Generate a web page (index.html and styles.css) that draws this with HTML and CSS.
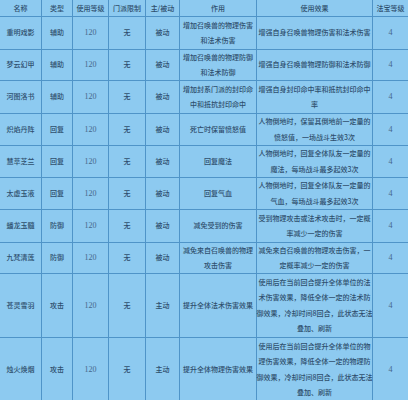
FILE: index.html
```html
<!DOCTYPE html>
<html lang="zh">
<head>
<meta charset="utf-8">
<title>法宝</title>
<link rel="stylesheet" href="styles.css">
</head>
<body>
<div class="table">
  <div class="c h">名称</div><div class="c h">类型</div><div class="c h">使用等级</div><div class="c h">门派限制</div><div class="c h">主/被动</div><div class="c h">作用</div><div class="c h">使用效果</div><div class="c h">法宝等级</div>

  <div class="c">重明戏影</div><div class="c">辅助</div><div class="c n">120</div><div class="c">无</div><div class="c">被动</div><div class="c">增加召唤兽的物理伤害<br>和法术伤害</div><div class="c">增强自身召唤兽物理伤害和法术伤害</div><div class="c n">4</div>

  <div class="c">梦云幻甲</div><div class="c">辅助</div><div class="c n">120</div><div class="c">无</div><div class="c">被动</div><div class="c">增加召唤兽的物理防御<br>和法术防御</div><div class="c">增强自身召唤兽物理防御和法术防御</div><div class="c n">4</div>

  <div class="c">河图洛书</div><div class="c">辅助</div><div class="c n">120</div><div class="c">无</div><div class="c">被动</div><div class="c">增加封系门派的封印命<br>中和抵抗封印命中</div><div class="c">增强自身封印命中率和抵抗封印命中<br>率</div><div class="c n">4</div>

  <div class="c">炽焰丹阵</div><div class="c">回复</div><div class="c n">120</div><div class="c">无</div><div class="c">被动</div><div class="c">死亡时保留愤怒值</div><div class="c">人物倒地时，保留其倒地前一定量的<br>愤怒值，一场战斗生效3次</div><div class="c n">4</div>

  <div class="c">慧萃芝兰</div><div class="c">回复</div><div class="c n">120</div><div class="c">无</div><div class="c">被动</div><div class="c">回复魔法</div><div class="c">人物倒地时，回复全体队友一定量的<br>魔法，每场战斗最多起效3次</div><div class="c n">4</div>

  <div class="c">太虚玉液</div><div class="c">回复</div><div class="c n">120</div><div class="c">无</div><div class="c">被动</div><div class="c">回复气血</div><div class="c">人物倒地时，回复全体队友一定量的<br>气血，每场战斗最多起效3次</div><div class="c n">4</div>

  <div class="c">蟠龙玉髓</div><div class="c">防御</div><div class="c n">120</div><div class="c">无</div><div class="c">被动</div><div class="c">减免受到的伤害</div><div class="c">受到物理攻击或法术攻击时，一定概<br>率减少一定的伤害</div><div class="c n">4</div>

  <div class="c">九梵清莲</div><div class="c">防御</div><div class="c n">120</div><div class="c">无</div><div class="c">被动</div><div class="c">减免来自召唤兽的物理<br>攻击伤害</div><div class="c">减免来自召唤兽的物理攻击伤害，一<br>定概率减少一定的伤害</div><div class="c n">4</div>

  <div class="c">苍灵雪羽</div><div class="c">攻击</div><div class="c n">120</div><div class="c">无</div><div class="c">主动</div><div class="c">提升全体法术伤害效果</div><div class="c">使用后在当前回合提升全体单位的法<br>术伤害效果，降低全体一定的法术防<br>御效果，冷却时间8回合，此状态无法<br>叠加、刷新</div><div class="c n">4</div>

  <div class="c">烛火焕烟</div><div class="c">攻击</div><div class="c n">120</div><div class="c">无</div><div class="c">主动</div><div class="c">提升全体物理伤害效果</div><div class="c">使用后在当前回合提升全体单位的物<br>理伤害效果，降低全体一定的物理防<br>御效果，冷却时间8回合，此状态无法<br>叠加、刷新</div><div class="c n">4</div>
</div>
</body>
</html>
```

FILE: styles.css
```css
html, body {
  margin: 0;
  padding: 0;
  background: #8dcaf0;
  overflow: hidden;
}

.table {
  display: grid;
  grid-template-columns: 41px 30px 35px 36px 33px 76px 115px 35px;
  grid-template-rows: 16px 32px 30px 32px 31px 31px 31px 32px 30px 63px 63px;
  gap: 1px;
  background: #4f94c8;
  width: 420px;
  font-family: "Noto Sans CJK SC", "Noto Sans", sans-serif;
  font-size: 7px;
  font-weight: 500;
  line-height: 15.5px;
  color: #2f4f6d;
}

.c {
  background: #8dcaf0;
  display: flex;
  align-items: center;
  justify-content: center;
  text-align: center;
  white-space: nowrap;
}

.n {
  font-family: "Liberation Serif", serif;
  font-size: 8px;
  font-weight: normal;
  color: #46668a;
}

.h {
  line-height: 16px;
}
```
